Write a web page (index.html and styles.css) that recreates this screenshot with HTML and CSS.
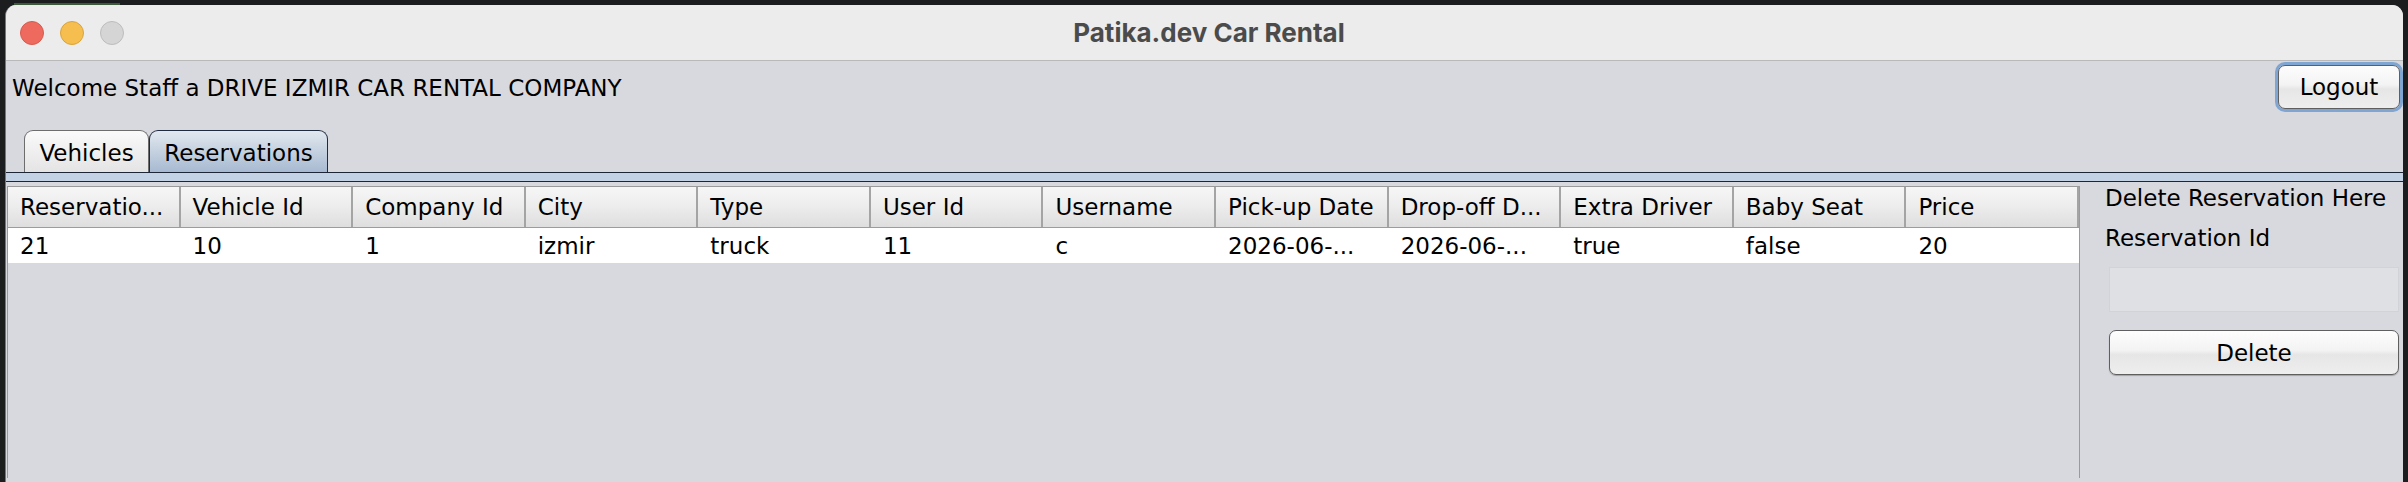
FILE: index.html
```html
<!DOCTYPE html>
<html lang="en">
<head>
<meta charset="utf-8">
<title>Patika.dev Car Rental</title>
<link rel="stylesheet" href="styles.css">
</head>
<body>
<div class="desk-strip"></div>
<div class="window">
  <div class="titlebar">
    <div class="lights">
      <span class="light red"></span>
      <span class="light yellow"></span>
      <span class="light gray"></span>
    </div>
    <div class="title">Patika.dev Car Rental</div>
  </div>
  <div class="content">
    <div class="toprow">
      <div class="welcome">Welcome Staff a DRIVE IZMIR CAR RENTAL COMPANY</div>
      <button class="aqua-btn logout">Logout</button>
    </div>
    <div class="tabs">
      <div class="tab vehicles">Vehicles</div>
      <div class="tab selected">Reservations</div>
    </div>
    <div class="tab-band"></div>
    <div class="main">
      <div class="scrollpane">
        <div class="table">
          <div class="thead">
            <div class="th">Reservatio...</div>
            <div class="th">Vehicle Id</div>
            <div class="th">Company Id</div>
            <div class="th">City</div>
            <div class="th">Type</div>
            <div class="th">User Id</div>
            <div class="th">Username</div>
            <div class="th">Pick-up Date</div>
            <div class="th">Drop-off D...</div>
            <div class="th">Extra Driver</div>
            <div class="th">Baby Seat</div>
            <div class="th">Price</div>
          </div>
          <div class="trow">
            <div class="td">21</div>
            <div class="td">10</div>
            <div class="td">1</div>
            <div class="td">izmir</div>
            <div class="td">truck</div>
            <div class="td">11</div>
            <div class="td">c</div>
            <div class="td">2026-06-...</div>
            <div class="td">2026-06-...</div>
            <div class="td">true</div>
            <div class="td">false</div>
            <div class="td">20</div>
          </div>
        </div>
      </div>
      <div class="side">
        <div class="side-label first">Delete Reservation Here</div>
        <div class="side-label second">Reservation Id</div>
        <div class="field"></div>
        <button class="aqua-btn delete">Delete</button>
      </div>
    </div>
  </div>
</div>
</body>
</html>
```
FILE: styles.css
```css
* { box-sizing: border-box; }
html, body {
  margin: 0;
  padding: 0;
  width: 2408px;
  height: 482px;
  overflow: hidden;
  background: #1c1d1f;
}
.desk-strip {
  height: 5px;
  background: linear-gradient(90deg, #1c1d1f 0, #1c1d1f 14px, #3d5a3b 14px, #3d5a3b 120px, #1c1d1f 120px);
  background-size: 100% 2px;
  background-repeat: no-repeat;
  background-position: 0 3px;
}
.window {
  margin-left: 5px;
  width: 2398px;
  height: 477px;
  border-radius: 11px 11px 0 0;
  overflow: hidden;
  background: #d8d9de;
  border-left: 1px solid #777;
  font-family: "DejaVu Sans", sans-serif;
  color: #000;
}
.titlebar {
  height: 56px;
  background: #ececec;
  border-bottom: 1px solid #b9b9b9;
  display: flex;
  align-items: center;
}
.lights {
  display: flex;
  gap: 16px;
  padding-left: 14px;
}
.light {
  width: 24px;
  height: 24px;
  border-radius: 50%;
  display: block;
}
.light.red { background: #ee6a5e; border: 1px solid #d75a4f; }
.light.yellow { background: #f5be4f; border: 1px solid #d9a43e; }
.light.gray { background: #d5d5d5; border: 1px solid #bdbdbd; }
.title {
  flex: 1;
  text-align: center;
  margin-left: -109px;
  font-family: "Inter", Roboto, sans-serif;
  font-weight: 700;
  font-size: 26px;
  color: #4b4b4b;
}
.content {
  display: flex;
  flex-direction: column;
}
.toprow {
  height: 52px;
  display: flex;
  align-items: center;
  justify-content: space-between;
  padding: 0 3px 0 6px;
}
.welcome {
  font-size: 23px;
  padding-top: 2px;
}
.aqua-btn {
  font-family: "DejaVu Sans", sans-serif;
  font-size: 23px;
  color: #000;
  border: 1px solid #5f5f5f;
  border-radius: 7px;
  background: linear-gradient(#fdfdfd 0%, #f3f3f3 45%, #e6e6e6 55%, #eeeeee 100%);
  box-shadow: 0 1px 1px rgba(0,0,0,0.25);
  padding: 0;
}
.logout {
  width: 122px;
  height: 44px;
  box-shadow: 0 0 0 3px #7fa6d2;
}
.tabs {
  display: flex;
  margin-top: 17px;
  padding-left: 18px;
  height: 42px;
}
.tab {
  height: 42px;
  display: flex;
  align-items: center;
  justify-content: center;
  padding-top: 2px;
  font-size: 23px;
  border: 1.5px solid #6d6d6d;
  border-bottom: none;
  border-radius: 9px 9px 0 0;
  background: linear-gradient(#fafafa, #e4e4e4);
}
.tab.vehicles { width: 125px; }
.tab.selected {
  width: 179px;
  border-color: #1f2c40;
  background: linear-gradient(#e2e8ef, #a7bad1);
}
.tab-band {
  height: 10px;
  border-top: 1px solid #1c2636;
  border-bottom: 1px solid #1c2636;
  background: #c3d2e5;
}
.main {
  display: flex;
  padding-top: 4px;
  height: 296px;
}
.scrollpane {
  width: 2073px;
  margin-left: 1px;
  border: 1px solid #9a9a9a;
  border-bottom: none;
  background: #d8d9de;
}
.table {
  display: flex;
  flex-direction: column;
}
.thead, .trow {
  display: grid;
  grid-template-columns: repeat(12, 1fr);
}
.thead {
  height: 41px;
  background: linear-gradient(#f6f6f6 0%, #ececec 50%, #dedede 100%);
  border-bottom: 1px solid #9c9c9c;
}
.th {
  display: flex;
  align-items: center;
  padding-left: 12px;
  font-size: 23px;
  border-right: 2px solid #a4a4a4;
  white-space: nowrap;
  overflow: hidden;
}
.trow {
  height: 35px;
  background: #fff;
}
.td {
  display: flex;
  align-items: center;
  padding-left: 12px;
  font-size: 23px;
  white-space: nowrap;
  overflow: hidden;
}
.side {
  flex: 1;
  display: flex;
  flex-direction: column;
  padding: 0 4px 0 25px;
}
.side-label {
  font-size: 23px;
  line-height: 24px;
  white-space: nowrap;
}
.side-label.second {
  margin-top: 16px;
}
.field {
  margin: 17px 0 0 4px;
  height: 45px;
  background: #dfe0e4;
  border: 1px solid #d2d3d8;
}
.delete {
  margin: 18px 0 0 4px;
  height: 45px;
}
```
